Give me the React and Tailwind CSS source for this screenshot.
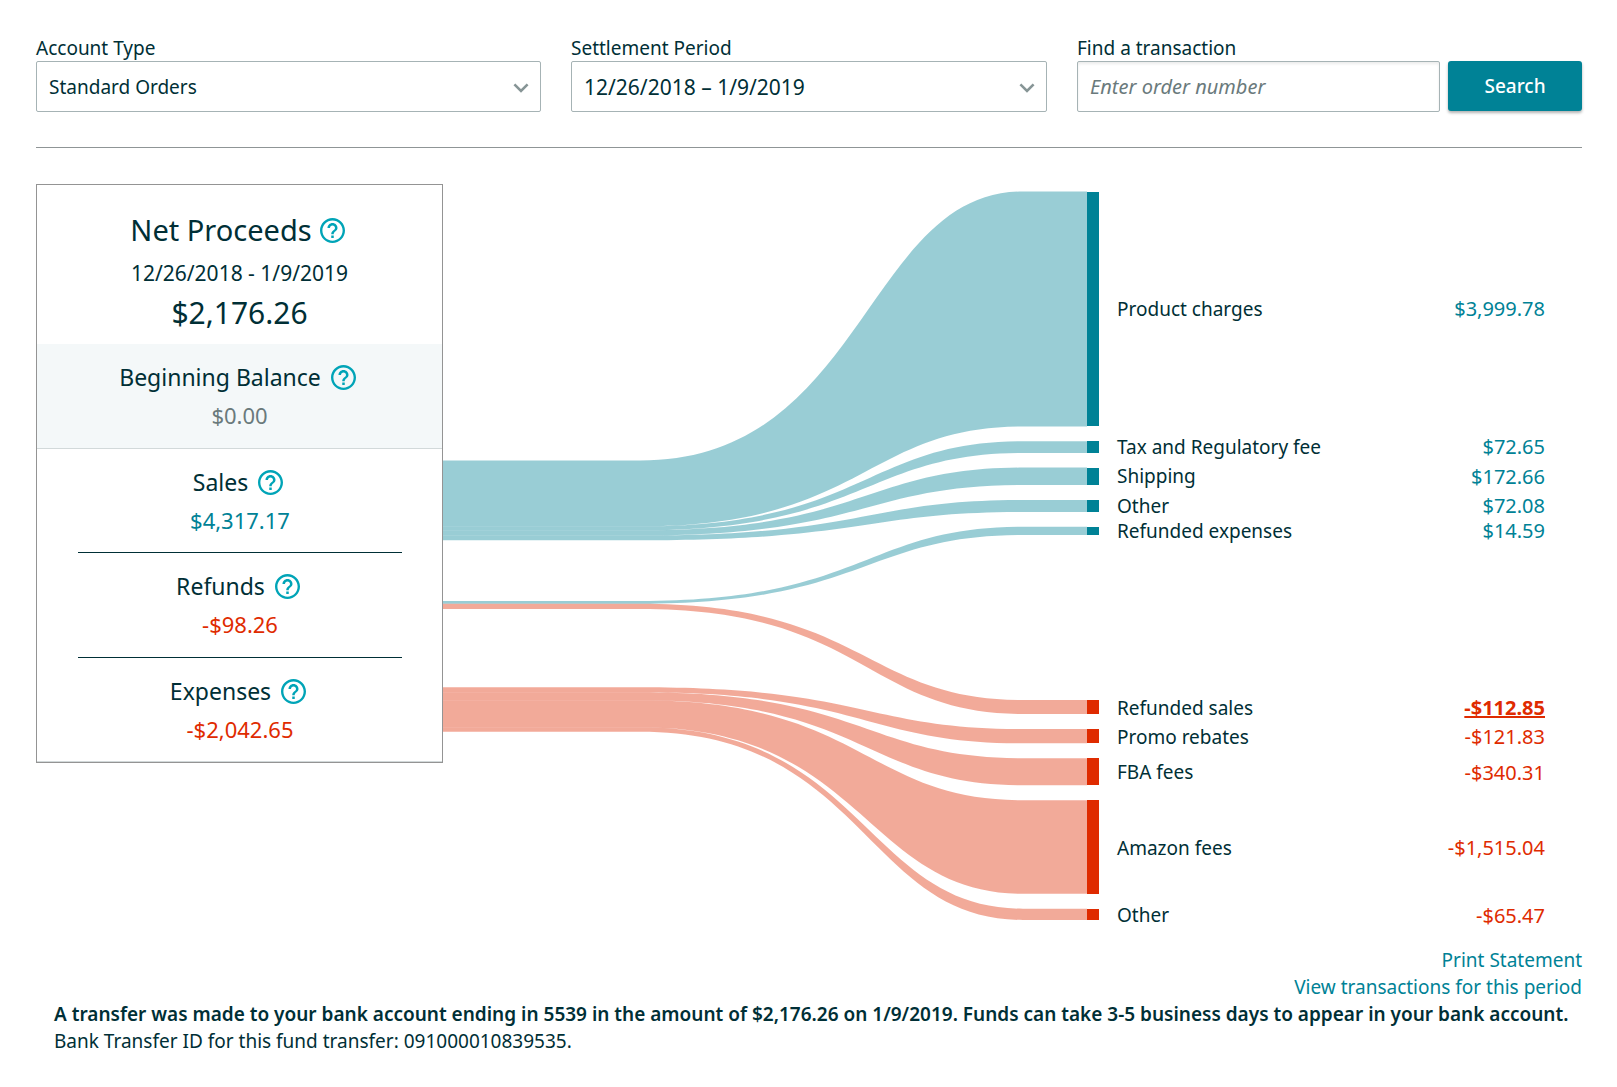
import React from 'react';

const CHART_WIDTH = 656;
const CHART_HEIGHT = 736;

// left / right: [top, bottom] of the ribbon at each edge of the chart
const FLOWS = [
  { label: 'Product charges', amount: '$3,999.78', left: [276.6, 342.3], right: [7.5, 242.4] },
  { label: 'Tax and Regulatory fee', amount: '$72.65', left: [342.3, 346.3], right: [257.2, 269] },
  { label: 'Shipping', amount: '$172.66', left: [346.3, 351.6], right: [283.6, 301] },
  { label: 'Other', amount: '$72.08', left: [351.6, 356.3], right: [316.1, 328] },
  { label: 'Refunded expenses', amount: '$14.59', left: [417, 419.8], right: [342.8, 351] },
  { label: 'Refunded sales', amount: '-$112.85', left: [419.8, 425], right: [516, 530], active: true },
  { label: 'Promo rebates', amount: '-$121.83', left: [503.3, 508.3], right: [545, 559.3] },
  { label: 'FBA fees', amount: '-$340.31', left: [508.3, 516.3], right: [574.2, 601.3] },
  { label: 'Amazon fees', amount: '-$1,515.04', left: [516.3, 543.3], right: [616.2, 709.8] },
  { label: 'Other', amount: '-$65.47', left: [543.3, 547.8], right: [724.7, 736] },
];

const INCOME_ROWS = [
  { ...FLOWS[0], height: 'h-[234px]' },
  { ...FLOWS[1], height: 'h-[12px]' },
  { ...FLOWS[2], height: 'h-[17px]' },
  { ...FLOWS[3], height: 'h-[12px]' },
  { ...FLOWS[4], height: 'h-[8px]' },
];

const EXPENSE_ROWS = [
  { ...FLOWS[5], height: 'h-[14px]' },
  { ...FLOWS[6], height: 'h-[14px]' },
  { ...FLOWS[7], height: 'h-[27px]' },
  { ...FLOWS[8], height: 'h-[94px]' },
  { ...FLOWS[9], height: 'h-[11px]' },
];

const SUMMARY = [
  { title: 'Sales', amount: '$4,317.17', color: 'text-[#008296]', height: 'h-[104px]' },
  { title: 'Refunds', amount: '-$98.26', color: 'text-[#df2b00]', height: 'h-[105px]' },
  { title: 'Expenses', amount: '-$2,042.65', color: 'text-[#df2b00]', height: 'h-[103px]' },
];

const isNegative = (amount) => amount.startsWith('-');

const ribbonPath = ([l0, l1], [r0, r1]) =>
  `M0 ${l0} H197 C422 ${l0} 422 ${r0} 580 ${r0} H644 V${r1} H580 C422 ${r1} 422 ${l1} 197 ${l1} H0 Z`;

const HelpButton = ({ topic }) => (
  <button type="button" aria-label={`Help: ${topic}`} className="shrink-0 cursor-pointer text-[#00a4b7]">
    <svg width="25" height="25" viewBox="2 2 20 20" fill="currentColor" className="block">
      <path d="M11 18h2v-2h-2v2zm1-16C6.48 2 2 6.48 2 12s4.48 10 10 10 10-4.48 10-10S17.52 2 12 2zm0 18.1c-4.46 0-8.1-3.64-8.1-8.1s3.64-8.1 8.1-8.1 8.1 3.64 8.1 8.1-3.64 8.1-8.1 8.1zm0-14.1c-2.21 0-4 1.79-4 4h2c0-1.1.9-2 2-2s2 .9 2 2c0 2-3 1.75-3 5h2c0-2.25 3-2.5 3-5 0-2.21-1.79-4-4-4z" />
    </svg>
  </button>
);

const SelectField = ({ id, label, value, size }) => (
  <div className="flex flex-col">
    <label htmlFor={id} className="leading-[26px]">{label}</label>
    <div className="relative">
      <select
        id={id}
        defaultValue={value}
        className={`h-[51px] w-full appearance-none rounded-[2px] border border-[#a6b3b5] bg-white pt-0.5 pr-10 pl-3 ${size}`}
      >
        <option value={value}>{value}</option>
      </select>
      <svg
        width="16"
        height="10"
        viewBox="0 0 16 10"
        className="pointer-events-none absolute top-[22px] right-3"
        fill="none"
        stroke="#879596"
        strokeWidth="2.6"
      >
        <path d="M1.4 1.4 L8 8 L14.6 1.4" />
      </svg>
    </div>
  </div>
);

const SummaryItem = ({ title, amount, color, height }) => (
  <div className={`flex flex-col items-center pt-[19px] text-center ${height}`}>
    <div className="flex items-center gap-2.5 pr-1">
      <h3 className="text-[23px] leading-[28px]">{title}</h3>
      <HelpButton topic={title} />
    </div>
    <p className={`mt-2 text-[22px] leading-[32px] ${color}`}>{amount}</p>
  </div>
);

const BreakdownList = ({ rows }) => (
  <ul className="flex flex-col gap-[15px]">
    {rows.map((row) => (
      <li key={row.amount} className={`flex items-center justify-between ${row.height}`}>
        <span>{row.label}</span>
        <a
          href="#transactions"
          className={`text-[20px] leading-[26px] ${isNegative(row.amount) ? 'text-[#df2b00]' : 'text-[#008296]'} ${row.active ? 'font-bold underline' : ''}`}
        >
          {row.amount}
        </a>
      </li>
    ))}
  </ul>
);

const FlowChart = () => (
  <svg
    role="img"
    aria-label="Proceeds breakdown"
    viewBox={`0 0 ${CHART_WIDTH} ${CHART_HEIGHT}`}
    preserveAspectRatio="none"
    className="block h-[736px] min-w-0 flex-1"
  >
    {FLOWS.map((flow) => {
      const color = isNegative(flow.amount) ? '#df2b00' : '#008296';
      const top = Math.round(flow.right[0] + 0.2);
      const bottom = Math.round(flow.right[1] - 0.1);
      return (
        <g key={flow.amount} fill={color}>
          <path d={ribbonPath(flow.left, flow.right)} fillOpacity="0.4" />
          <rect x="644" y={top} width="12" height={bottom - top} />
        </g>
      );
    })}
  </svg>
);

const App = () => {
  return (
    <main className="bg-white pt-[35px] pr-[35px] pb-8 pl-9 font-['Noto_Sans',sans-serif] text-[19px] leading-[27px] text-[#002f36]">
      <form
        className="grid grid-cols-[505fr_476fr_505fr] gap-[30px]"
        onSubmit={(e) => e.preventDefault()}
      >
        <SelectField id="account-type" label="Account Type" value="Standard Orders" size="text-[19px]" />
        <SelectField id="settlement-period" label="Settlement Period" value="12/26/2018 – 1/9/2019" size="text-[21px]" />
        <div className="flex flex-col">
          <label htmlFor="order-number" className="leading-[26px]">Find a transaction</label>
          <div className="flex gap-2">
            <input
              id="order-number"
              type="text"
              placeholder="Enter order number"
              className="h-[51px] min-w-0 flex-1 rounded-[2px] border border-[#a6b3b5] px-3 text-[20px] shadow-[inset_0_2px_3px_rgba(0,0,0,0.08)] placeholder:text-[#6a7a7c] placeholder:italic"
            />
            <button
              type="submit"
              className="h-[50px] w-[134px] cursor-pointer rounded-[3px] bg-[#008296] font-medium text-white shadow-[0_2px_3px_rgba(0,0,0,0.3)]"
            >
              Search
            </button>
          </div>
        </div>
      </form>

      <hr className="mt-[35px] border-[#8f9596]" />

      <div className="mt-9 flex items-start">
        <section className="w-[407px] shrink-0 border border-[#949494]">
          <div className="flex h-[159px] flex-col items-center pt-[25px] text-center">
            <div className="flex items-center gap-2 pr-1">
              <h2 className="text-[29px] leading-[40px]">Net Proceeds</h2>
              <HelpButton topic="Net Proceeds" />
            </div>
            <p className="text-[21px] leading-[47px]">12/26/2018 - 1/9/2019</p>
            <p className="text-[30px] leading-[32px]">$2,176.26</p>
          </div>
          <div className="border-b border-[#d2d9da] bg-[#f4f8f9]">
            <SummaryItem title="Beginning Balance" amount="$0.00" color="text-[#6a7a7c]" height="h-[104px]" />
          </div>
          <div className="border-b border-[#d2d9da] pr-10 pl-[41px]">
            <div className="divide-y divide-[#002f36]">
              {SUMMARY.map((item) => (
                <SummaryItem key={item.title} {...item} />
              ))}
            </div>
          </div>
        </section>

        <FlowChart />

        <div className="w-[483px] shrink-0 pt-2 pr-[37px] pl-[18px]">
          <BreakdownList rows={INCOME_ROWS} />
          <div className="mt-[166px]">
            <BreakdownList rows={EXPENSE_ROWS} />
          </div>
        </div>
      </div>

      <nav className="mt-[26px] flex flex-col items-end text-[#008296]">
        <a href="#print">Print Statement</a>
        <a href="#transactions">View transactions for this period</a>
      </nav>
      <div className="pl-[18px]">
        <p className="font-semibold">
          A transfer was made to your bank account ending in 5539 in the amount of $2,176.26 on 1/9/2019. Funds can take 3-5 business days to appear in your bank account.
        </p>
        <p>Bank Transfer ID for this fund transfer: 091000010839535.</p>
      </div>
    </main>
  );
};

export default App;
